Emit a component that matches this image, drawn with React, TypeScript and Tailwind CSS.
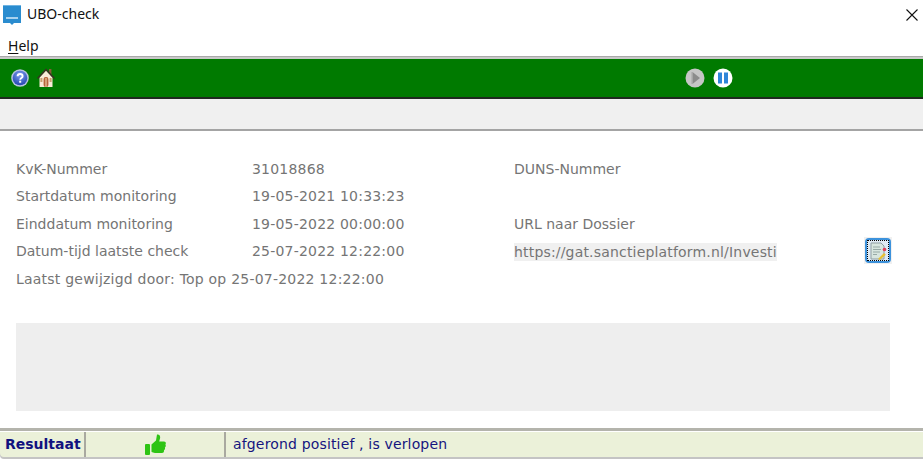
const font = "font-['DejaVu_Sans',sans-serif]";

function AppLogo() {
  return (
    <svg width="20" height="24" viewBox="0 0 20 24" className="block">
      <path d="M2 3h18v18h-7l-2 2-2-2H2z" fill="#2a8ccf" />
      <rect x="2" y="3" width="18" height="1" fill="#6fb4e2" />
      <rect x="5" y="15" width="12" height="2" fill="#a9d2ee" />
    </svg>
  );
}

function HelpIcon() {
  return (
    <svg width="18" height="18" viewBox="0 0 18 18" className="block">
      <defs>
        <radialGradient id="hb" cx="50%" cy="30%" r="70%">
          <stop offset="0" stopColor="#7f9ff0" />
          <stop offset="1" stopColor="#2346b0" />
        </radialGradient>
      </defs>
      <circle cx="9" cy="9" r="8.8" fill="#b6c2df" />
      <circle cx="9" cy="9" r="7.3" fill="url(#hb)" />
      <path d="M6.6 7.2c.1-3 5-3 5 0 0 2-2.4 1.7-2.4 3.5" fill="none" stroke="#fff" strokeWidth="1.9" />
      <rect x="8.2" y="11.7" width="2" height="2" fill="#fff" />
    </svg>
  );
}

function HomeIcon() {
  return (
    <svg width="18" height="20" viewBox="0 0 18 20" className="block">
      <rect x="12" y="1" width="2.4" height="6" fill="#8a5a3a" />
      <path d="M2.5 9.5 9 2.5l6.5 7V19h-13z" fill="#f8ead6" />
      <path d="M.6 10.4 9 1.6l8.4 8.8" fill="none" stroke="#3a2f24" strokeWidth="1.5" />
      <rect x="6.6" y="9" width="4.8" height="10" rx="2" fill="#b5653a" />
      <rect x="8.4" y="10" width="1.2" height="9" fill="#e8c8a0" />
      <rect x="3.4" y="10" width="2" height="4" fill="#c9a070" />
      <rect x="12.6" y="10" width="2" height="4" fill="#c9a070" />
    </svg>
  );
}

function PlayIcon() {
  return (
    <svg width="20" height="20" viewBox="0 0 20 20" className="block">
      <circle cx="10" cy="10" r="9.5" fill="#c6c6c6" />
      <path d="M7.5 4 15 10l-7.5 6z" fill="#8c8c8c" />
      <path d="M7 4v12" stroke="#a4a4a4" strokeWidth="1" />
    </svg>
  );
}

function PauseIcon() {
  return (
    <svg width="20" height="20" viewBox="0 0 20 20" className="block">
      <circle cx="10" cy="10" r="9.5" fill="#fff" />
      <rect x="5" y="4.5" width="4" height="11" fill="#2f86d8" />
      <rect x="11" y="4.5" width="4" height="11" fill="#2f86d8" />
    </svg>
  );
}

function DossierIcon() {
  return (
    <div className="w-[28px] h-[27px] bg-[#f0f0f0] flex items-center justify-center">
      <div className="w-[26px] h-[25px] rounded-[4px] border-2 border-[#3c92dc] bg-[#dfeaf3]">
        <div className="w-full h-full border border-dotted border-black flex items-center justify-center">
          <svg width="18" height="18" viewBox="0 0 18 18" className="block">
            <path d="M2 1h10l3 3v13H2z" fill="#d8e6df" stroke="#8f9ea2" strokeWidth="1" />
            <path d="M4 5h7M4 7.5h8M4 10h7M4 12.5h4" stroke="#97aaa6" strokeWidth="1" />
            <path d="M9 17l6-6 1.8 1.8-6 5.2z" fill="#e8c030" />
            <circle cx="15.5" cy="7.5" r="1.8" fill="#e0405a" />
          </svg>
        </div>
      </div>
    </div>
  );
}

function ThumbIcon() {
  return (
    <svg width="21" height="22" viewBox="0 0 21 22" className="block">
      <rect x="0" y="10" width="5" height="11" rx="1" fill="#2ec414" />
      <path d="M6.5 10.5 11 6.5 12 .5c2.5-.5 3.6 1.5 3 4l-.8 3H19c2 0 2.2 2 1.4 3 .7 1 .5 2.4-.5 3 .4 1.2 0 2.2-.9 2.8.2 1.6-.7 2.7-2 2.7H10c-1.5 0-2.4-.5-3.5-1.2z" fill="#2ec414" />
    </svg>
  );
}

function Row({ label, value }: { label: string; value?: string }) {
  return (
    <div className="flex h-[27.5px] items-center">
      <div className="w-[236px] shrink-0">{label}</div>
      <div className="tracking-[0.2px]">{value}</div>
    </div>
  );
}

export default function App() {
  return (
    <div className={`w-[923px] h-[459px] bg-white flex flex-col overflow-hidden ${font}`}>
      <div className="h-[27px] flex items-center font-['Noto_Sans',sans-serif] text-[#111] text-[14px]">
        <div className="ml-[1px] w-[21px] h-[26px] flex items-center"><AppLogo /></div>
        <div className="ml-[5px]">UBO-check</div>
        <svg width="12" height="12" viewBox="0 0 12 12" className="ml-auto mr-[5px] mt-[3px] block">
          <path d="M.5.5l11 11M11.5.5l-11 11" stroke="#111" strokeWidth="1.1" />
        </svg>
      </div>
      <div className="h-[29px] pt-[7px] flex items-center pl-[8px] font-['Noto_Sans',sans-serif] text-[14px] text-[#111]">
        <span className="underline underline-offset-2">H</span>elp
      </div>
      <div className="h-[3px] bg-[#c8c8c8] border-t border-[#a9a9a9]" />
      <div className="h-[40px] bg-[#007a00] border-b-2 border-[#1f2a1f] flex items-center">
        <div className="ml-[11px]"><HelpIcon /></div>
        <div className="ml-[8px]"><HomeIcon /></div>
        <div className="ml-[630px]"><PlayIcon /></div>
        <div className="ml-[8px]"><PauseIcon /></div>
      </div>
      <div className="h-[32px] bg-[#f0f0f0] border-b-2 border-[#a4a4a4]" />
      <div className="flex-1 flex flex-col text-[14px] text-[#757575] pl-[16px] pt-[24.5px]">
        <div className="flex">
          <div className="w-[498px] shrink-0">
            <Row label="KvK-Nummer" value="31018868" />
            <Row label="Startdatum monitoring" value="19-05-2021 10:33:23" />
            <Row label="Einddatum monitoring" value="19-05-2022 00:00:00" />
            <Row label="Datum-tijd laatste check" value="25-07-2022 12:22:00" />
          </div>
          <div className="flex-1">
            <div className="h-[27.5px] flex items-center">DUNS-Nummer</div>
            <div className="h-[27.5px]" />
            <div className="h-[27.5px] flex items-center">URL naar Dossier</div>
            <div className="h-[27.5px] flex items-center">
              <div className="w-[263px] h-[18px] leading-[18px] bg-[#f0f0f0] whitespace-nowrap tracking-[0.18px]">
                https://gat.sanctieplatform.nl/Investi
              </div>
              <div className="ml-[87px] -mt-[2px]"><DossierIcon /></div>
            </div>
          </div>
        </div>
        <div className="h-[27.5px] flex items-center tracking-[0.22px]">Laatst gewijzigd door: Top op 25-07-2022 12:22:00</div>
        <div className="mt-[29.5px] w-[874px] h-[88px] bg-[#eeeeee]" />
      </div>
      <div className="h-[31px] border-t-[3px] border-[#b4b4ac] pt-[1px] bg-white">
        <div className="w-full h-[25px] bg-[#ebf1d9] flex text-[14px] shadow-[0_2px_0_#c4c4c4] rounded-bl-[4px]">
          <div className="w-[86px] pl-[5px] font-bold text-[#11117f] flex items-center border-r-2 border-[#a9a9a0] whitespace-nowrap">Resultaat</div>
          <div className="w-[140px] flex items-center justify-center border-r-2 border-[#a9a9a0] pl-[1px]"><ThumbIcon /></div>
          <div className="flex-1 pl-[7px] flex items-center tracking-[0.16px] text-[#15157f]">afgerond positief , is verlopen</div>
        </div>
      </div>
    </div>
  );
}
